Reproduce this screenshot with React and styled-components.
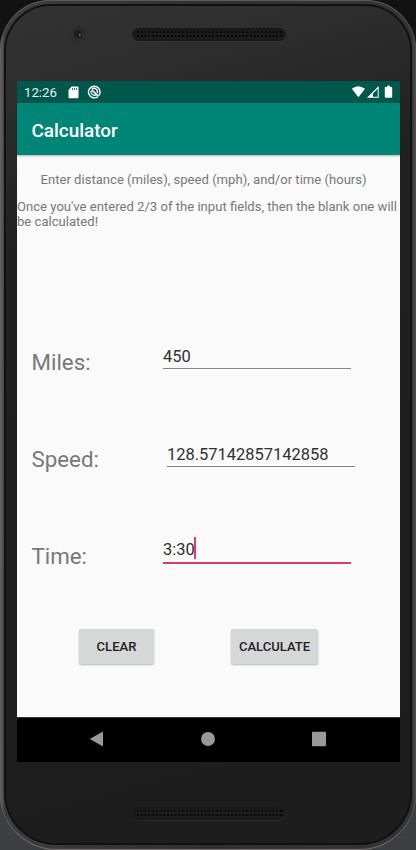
import React from "react";
import styled, { createGlobalStyle } from "styled-components";

const GlobalStyle = createGlobalStyle`
  * { box-sizing: border-box; }
  body { margin: 0; font-family: Roboto, "Noto Sans", sans-serif; }
`;

const Desktop = styled.div`
  width: 416px;
  height: 850px;
  overflow: hidden;
  background: linear-gradient(#121212 0 50%, #3c3f41 50%);
`;

const Frame = styled.div`
  height: 850px;
  padding: 4px 4px 5px;
  border-radius: 50px 50px 56px 56px;
  background: linear-gradient(90deg, #606060, #5a5a5a 2px, #3e3d3e 4px, #302f30 50%, #353435 412px, #484848 415px);
  box-shadow: inset 0 1px 1px #605e5f, inset 0 -1px 1px #777374;
`;

const Face = styled.div`
  height: 100%;
  display: flex;
  flex-direction: column;
  padding: 0 11px;
  border: 2px solid #111;
  border-radius: 47px 47px 52px 52px;
  background: linear-gradient(165deg, #333334 0, #2c2c2c 110px, #202020 240px, #1d1d1e 100%);
`;

const Forehead = styled.div`
  height: 75px;
  display: flex;
  align-items: flex-start;
  padding: 18px 0 0 53px;
`;

const Camera = styled.div`
  width: 16px;
  height: 16px;
  margin: 2px 46px 0 0;
  border-radius: 50%;
  background: radial-gradient(circle at 61% 55%, #80606b 0 0.7px, transparent 1.2px),
    radial-gradient(circle, #1d1b22 0 3px, #2b2b2c 5px, #2f2f30 7px, #292929 8px);
`;

const Speaker = styled.div`
  width: 154px;
  height: 13px;
  padding: 2px 4px;
  margin: ${(p) => p.$margin || "4px 0 0"};
  border-radius: 7px;
  background: #191919;
  box-shadow: 0.5px 0.5px 0 #333;
`;

const Mesh = styled.div`
  height: 9px;
  background: radial-gradient(circle, #070707 0 0.8px, #1c1c1c 1.3px) 0 0 / 3.78px 4px;
`;

const Chin = styled.div`
  flex: 1;
`;

const Screen = styled.div`
  width: 383px;
  height: 681px;
  flex: none;
  display: flex;
  flex-direction: column;
  background: #fafafa;
`;

const StatusBar = styled.div`
  height: 22px;
  display: flex;
  align-items: center;
  padding: 0 7px;
  color: #fff;
  background: #00574b;
`;

const Clock = styled.span`
  width: 44px;
  font-size: 13.2px;
  line-height: 22px;
  color: #e8f0ef;
  padding-top: 1px;
`;

const StatusIcons = styled.svg`
  display: block;
  margin-left: ${(p) => p.$left || "0"};
`;

const AppBar = styled.header`
  height: 52px;
  flex: none;
  display: flex;
  align-items: center;
  padding: 2px 14.5px 0;
  color: #fff;
  font-size: 18.9px;
  font-weight: 500;
  background: #008577;
  box-shadow: 0 1px 2px rgba(0, 0, 0, 0.3);
`;

const Content = styled.main`
  height: 562px;
  padding-top: 17px;
  color: #787878;
`;

const Hint = styled.p`
  margin: ${(p) => p.$margin || "0"};
  font-size: 13.1px;
  line-height: ${(p) => p.$line || 15.3}px;
  white-space: nowrap;
`;

const Field = styled.label`
  height: 97px;
  display: flex;
  align-items: flex-start;
  padding-left: 14.5px;
`;

const FieldName = styled.span`
  width: ${(p) => p.$width}px;
  padding-top: 4px;
  font-size: 22.3px;
  line-height: 26px;
`;

const Entry = styled.span`
  width: 188px;
  height: ${(p) => (p.$active ? 25 : 24)}px;
  margin-top: ${(p) => p.$top || 0}px;
  display: flex;
  color: #303030;
  font-size: 16.45px;
  line-height: ${(p) => (p.$active ? 22 : 24)}px;
  border-bottom: ${(p) => (p.$active ? "2px solid #d93a74" : "1px solid #858585")};
`;

const Caret = styled.i`
  width: 2px;
  height: 22px;
  margin: -2px 0 0 -1px;
  background: #dc3c77;
`;

const Actions = styled.div`
  display: flex;
  gap: 77px;
  margin-top: -7px;
  padding-left: 62px;
`;

const Button = styled.button`
  width: ${(p) => p.$width}px;
  height: 35px;
  padding: 0;
  border: 0;
  border-radius: 2px;
  color: #222;
  background: #d6d7d7;
  font: 500 13.05px Roboto, sans-serif;
  box-shadow: 0 1px 2px rgba(0, 0, 0, 0.28);
`;

const NavBar = styled.nav`
  height: 45px;
  border-top: 1px solid #333;
  background: #000;
  display: flex;
  align-items: center;
  padding: 0 0 2px 72px;
  gap: 96px;
`;

const SdCard = () => (
  <StatusIcons width="11" height="13" viewBox="0 0 11 13">
    <path fill="#fff" d="M3.5.5h6A1 1 0 0 1 10.5 1.5v9.8a1 1 0 0 1-1 1H1.5a1 1 0 0 1-1-1V4z" />
    <path stroke="#00574b" strokeWidth=".8" d="M4.5 2v2M6.5 2v2M8.5 2v2" />
  </StatusIcons>
);

const NoSync = () => (
  <StatusIcons $left="8px" width="14" height="14" viewBox="0 0 14 14" fill="none" stroke="#fff">
    <path strokeWidth="1.4" d="M11.1 11.4A5.8 5.8 0 1 1 12.9 8.4Q12.5 10 11.6 10.8" />
    <path strokeWidth="1.3" d="M4.8 4.2A3.4 3.4 0 0 1 10.2 8M9.2 9.6A3.4 3.4 0 0 1 4 6" />
    <path strokeWidth="1.5" d="M4.7 4.9l6.6 6.2" />
  </StatusIcons>
);

const Signals = () => (
  <StatusIcons $left="auto" width="42" height="14" viewBox="0 0 42 14">
    <path fill="#fff" d="M.8 3.8Q7 -1.2 14 3.8L7.4 12.3z" />
    <path fill="#fff" fillRule="evenodd" d="M16 12.7L27.7 1v11.7zM22 11.7h4.7V3.8L22 8.5z" />
    <path fill="#fff" d="M36 .8h3V2h1.6q.6 0 .6.6v9.3q0 .8-.8.8h-5.8q-.8 0-.8-.8V2.6q0-.6.6-.6H36z" />
  </StatusIcons>
);

export default function App() {
  return (
    <Desktop>
      <GlobalStyle />
      <Frame>
        <Face>
          <Forehead>
            <Camera />
            <Speaker><Mesh /></Speaker>
          </Forehead>
          <Screen>
            <StatusBar>
              <Clock>12:26</Clock>
              <SdCard />
              <NoSync />
              <Signals />
            </StatusBar>
            <AppBar>Calculator</AppBar>
            <Content>
              <Hint $margin="0 0 12px 23.5px">Enter distance (miles), speed (mph), and/or time (hours)</Hint>
              <Hint $margin="0 0 115.6px" $line={15}>
                Once you've entered 2/3 of the input fields, then the blank one will
                <br />
                be calculated!
              </Hint>
              <Field>
                <FieldName $width={131.5}>Miles:</FieldName>
                <Entry>450</Entry>
              </Field>
              <Field>
                <FieldName $width={135.5}>Speed:</FieldName>
                <Entry $top={1}>128.57142857142858</Entry>
              </Field>
              <Field>
                <FieldName $width={131.5}>Time:</FieldName>
                <Entry $active>3:30<Caret /></Entry>
              </Field>
              <Actions>
                <Button $width={75}>CLEAR</Button>
                <Button $width={87}>CALCULATE</Button>
              </Actions>
            </Content>
            <NavBar>
              <svg width="15" height="16" viewBox="0 0 15 16"><path fill="#999" d="M14 .4v15L.8 8z" /></svg>
              <svg width="16" height="16" viewBox="0 0 16 16"><circle cx="8" cy="8" r="7" fill="#999" /></svg>
              <svg width="15" height="16" viewBox="0 0 15 16"><rect y=".7" width="14" height="14.6" rx=".7" fill="#999" /></svg>
            </NavBar>
          </Screen>
          <Chin>
            <Speaker $margin="45px 0 0 115px"><Mesh /></Speaker>
          </Chin>
        </Face>
      </Frame>
    </Desktop>
  );
}
